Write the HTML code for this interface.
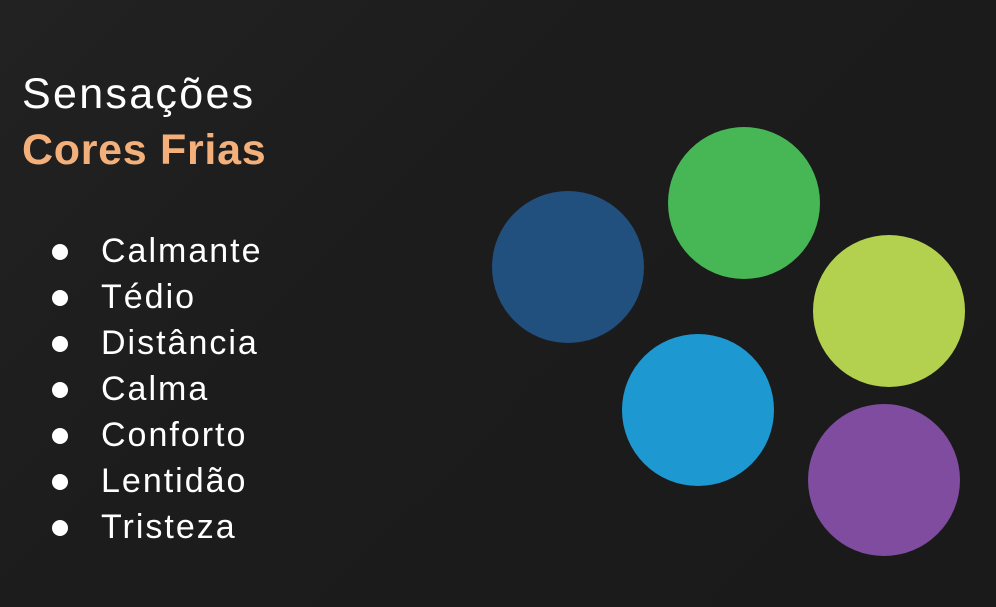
<!DOCTYPE html>
<html><head><meta charset="utf-8"><style>
html,body{margin:0;padding:0}
body{width:996px;height:607px;overflow:hidden;position:relative;background:linear-gradient(135deg,#222 0%,#1c1c1c 40%,#1a1a1a 100%);font-family:"Liberation Sans",sans-serif;color:#fff}
.t{position:absolute;left:22px;font-size:43px;line-height:1}
.c{position:absolute;border-radius:50%;width:152px;height:152px}
ul{position:absolute;left:0;top:228px;margin:0;padding:0;list-style:none}
li{position:relative;font-size:34px;line-height:46px;padding-left:101px;height:46px;letter-spacing:2px}
li:before{content:"";position:absolute;left:52px;top:16px;width:16px;height:16px;border-radius:50%;background:#fff}
</style></head><body>
<div class="t" style="top:73px;letter-spacing:2.3px">Sensações</div>
<div class="t" style="top:129px;color:#f4b07a;font-weight:bold;letter-spacing:0.7px">Cores Frias</div>
<ul><li>Calmante</li><li>Tédio</li><li>Distância</li><li>Calma</li><li>Conforto</li><li>Lentidão</li><li>Tristeza</li></ul>
<div class="c" style="left:492px;top:191px;background:#22507e"></div>
<div class="c" style="left:668px;top:127px;background:#47b655"></div>
<div class="c" style="left:813px;top:235px;background:#b3d14f"></div>
<div class="c" style="left:622px;top:334px;background:#1e98d1"></div>
<div class="c" style="left:808px;top:404px;background:#7f4c9f"></div>
</body></html>
